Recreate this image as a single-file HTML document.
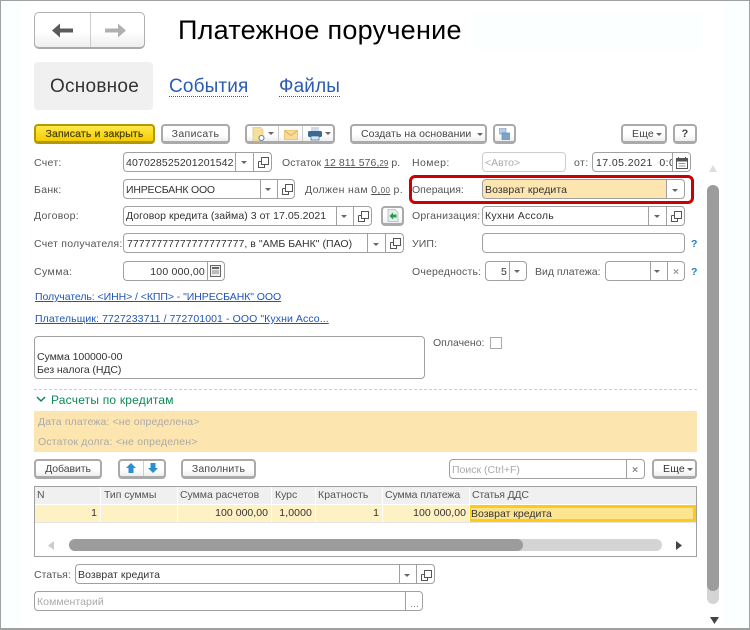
<!DOCTYPE html>
<html lang="ru"><head><meta charset="utf-8"><title>Платежное поручение</title>
<style>
html,body{margin:0;padding:0}
body{width:750px;height:630px;overflow:hidden;position:relative;background:#fff;font-family:"Liberation Sans",sans-serif;font-size:10.5px;color:#444}
div,a,svg{position:absolute;box-sizing:border-box}
.t{white-space:nowrap;line-height:14px;height:14px;letter-spacing:.1px;margin-top:1px}
.l{color:#555}
.v{color:#333}
.f{border:1px solid #a0a0a0;border-radius:4px;background:#fff}
.d{top:0;bottom:0;width:1px;background:#a0a0a0}
.b{border:2px solid #aaa;border-bottom-width:3px;border-radius:4px;background:linear-gradient(#fff 55%,#eee);color:#444;text-align:center;line-height:17px;letter-spacing:.2px;white-space:nowrap}
.a{width:0;height:0;border-left:3px solid transparent;border-right:3px solid transparent;border-top:3px solid #666}
.lk{color:#1f55b5;text-decoration:underline}
.th{top:487px;height:17px;background:#f0f0f0;line-height:16px;padding-left:3px;letter-spacing:-.05px;color:#555;white-space:nowrap}
.td{top:505px;height:17px;background:#fef1c4;line-height:17px;padding-right:3px;text-align:right;letter-spacing:.03px;color:#333;white-space:nowrap}
</style></head><body>
<div style="left:0;top:0;width:750px;height:630px;border:1px solid #a0a0a0;border-bottom:2px solid #a0a0a0;background:#fff"></div>
<div style="left:1px;top:1px;width:21px;height:627px;background:#fbffff"></div>
<div style="left:723px;top:1px;width:26px;height:627px;background:#fbffff"></div>
<div style="left:473px;top:13px;width:229px;height:37px;background:#fbffff"></div>

<div style="left:34px;top:12px;width:111px;height:37px;border:1px solid #b0b0b0;border-bottom:2px solid #aaa;border-radius:5px;background:linear-gradient(#fff 55%,#eee)"></div>
<div style="left:90px;top:13px;width:1px;height:34px;background:#ccc"></div>
<svg style="left:52px;top:23px" width="22" height="16"><path d="M0 7.5 L8 0.5 V5.5 H21 V9.5 H8 V14.5 Z" fill="#5a5a5a"/></svg>
<svg style="left:105px;top:23px" width="22" height="16"><path d="M21 7.5 L13 0.5 V5.5 H0 V9.5 H13 V14.5 Z" fill="#b0b0b0"/></svg>
<div style="left:178px;top:13px;font-size:27px;line-height:34px;color:#000;white-space:nowrap;letter-spacing:.26px">Платежное поручение</div>

<div style="left:34px;top:62px;width:119px;height:48px;background:#f0f0f0;border-radius:4px"></div>
<div style="left:50px;top:75px;font-size:19px;line-height:24px;color:#333;white-space:nowrap;letter-spacing:.25px">Основное</div>
<div style="left:169px;top:75px;font-size:19px;line-height:24px;color:#2a5db0;white-space:nowrap;border-bottom:1px dotted #2a5db0;height:22px;letter-spacing:.15px">События</div>
<div style="left:279px;top:75px;font-size:19px;line-height:24px;color:#2a5db0;white-space:nowrap;border-bottom:1px dotted #2a5db0;height:22px;letter-spacing:.15px">Файлы</div>

<!-- toolbar -->
<div class="b" style="left:34px;top:124px;width:121px;height:20px;background:linear-gradient(#ffe94a,#f5cc00);border-color:#b09a00;color:#4a4000;-webkit-text-stroke:.2px #4a4000;letter-spacing:.14px">Записать и закрыть</div>
<div class="b" style="left:161px;top:124px;width:69px;height:20px;letter-spacing:.35px">Записать</div>
<div class="b" style="left:245px;top:124px;width:90px;height:20px"></div>
<div style="left:278px;top:126px;width:1px;height:15px;background:#ccc"></div>
<div style="left:302px;top:126px;width:1px;height:15px;background:#ccc"></div>
<svg style="left:252px;top:127px" width="14" height="15"><path d="M1 0 H8 L11 3 V14 H1 Z" fill="#f5e09a" stroke="#dcc57a" stroke-width=".7"/><circle cx="9.5" cy="11" r="2.5" fill="#fff" stroke="#5a86b0" stroke-width="1.1"/></svg>
<div class="a" style="left:268px;top:132px"></div>
<svg style="left:284px;top:130px" width="14" height="10"><rect x=".5" y=".5" width="13" height="9" fill="#f7dc9c" stroke="#efc57a"/><path d="M1 1 L7 5.5 L13 1" fill="none" stroke="#e0ac55"/></svg>
<svg style="left:308px;top:127px" width="14" height="14"><rect x="3" y="0" width="8" height="5" fill="#cfdbe8"/><rect x="0" y="4" width="14" height="6" rx="1.5" fill="#3b6a97"/><rect x="3" y="9" width="8" height="4" fill="#dfe7ef" stroke="#3b6a97" stroke-width=".7"/></svg>
<div class="a" style="left:325px;top:132px"></div>
<div class="b" style="left:350px;top:124px;width:137px;height:20px;text-align:left;padding-left:9px;letter-spacing:.07px">Создать на основании</div>
<div class="a" style="left:477px;top:133px"></div>
<div class="b" style="left:493px;top:124px;width:23px;height:20px"></div>
<svg style="left:499px;top:128px" width="11" height="12"><rect x="0" y="0" width="7" height="6" fill="#b5cde3" stroke="#7fa3c5" stroke-width=".7"/><rect x="3" y="5" width="7.5" height="6.5" fill="#7fa3c5" stroke="#5f88ae" stroke-width=".7"/></svg>
<div class="b" style="left:621px;top:124px;width:46px;height:20px;text-align:left;padding-left:9px">Еще</div>
<div class="a" style="left:656px;top:133px"></div>
<div class="b" style="left:673px;top:124px;width:24px;height:20px;font-weight:bold;font-size:11px">?</div>

<!-- left form -->
<div class="t l" style="left:34px;top:155px;letter-spacing:.3px">Счет:</div>
<div class="f" style="left:123px;top:152px;width:149px;height:20px"><div class="d" style="left:111px"></div><div class="d" style="left:129px"></div></div>
<div class="t v" style="left:126px;top:155px;letter-spacing:.14px">407028525201201542</div>
<div class="a" style="left:241px;top:161px"></div>
<svg style="left:258px;top:157px" width="11" height="11"><path d="M3.5 .5 H10.5 V7.5 H3.5 Z M.5 4.5 H3.5 M.5 4.5 V10.5 H6.5 V7.5" fill="none" stroke="#555"/></svg>
<div class="t l" style="left:282px;top:155px;letter-spacing:.05px">Остаток <span style="text-decoration:underline">12 811 576,<span style="font-size:8px">29</span></span> р.</div>

<div class="t l" style="left:34px;top:182px;letter-spacing:.3px">Банк:</div>
<div class="f" style="left:123px;top:179px;width:172px;height:20px"><div class="d" style="left:136px"></div><div class="d" style="left:153px"></div></div>
<div class="t v" style="left:126px;top:182px;letter-spacing:-.2px">ИНРЕСБАНК ООО</div>
<div class="a" style="left:265px;top:188px"></div>
<svg style="left:282px;top:184px" width="11" height="11"><path d="M3.5 .5 H10.5 V7.5 H3.5 Z M.5 4.5 H3.5 M.5 4.5 V10.5 H6.5 V7.5" fill="none" stroke="#555"/></svg>
<div class="t l" style="left:305px;top:182px;letter-spacing:.35px">Должен нам <span style="text-decoration:underline">0,<span style="font-size:8px">00</span></span> р.</div>

<div class="t l" style="left:34px;top:208px;letter-spacing:.3px">Договор:</div>
<div class="f" style="left:123px;top:206px;width:249px;height:20px"><div class="d" style="left:212px"></div><div class="d" style="left:229px"></div></div>
<div class="t v" style="left:126px;top:208px;letter-spacing:.05px">Договор кредита (займа) 3 от 17.05.2021</div>
<div class="a" style="left:341px;top:215px"></div>
<svg style="left:358px;top:211px" width="11" height="11"><path d="M3.5 .5 H10.5 V7.5 H3.5 Z M.5 4.5 H3.5 M.5 4.5 V10.5 H6.5 V7.5" fill="none" stroke="#555"/></svg>
<div class="b" style="left:381px;top:206px;width:23px;height:20px"></div>
<svg style="left:387px;top:209px" width="12" height="13"><path d="M1 .5 H8 L11 3.5 V12.5 H1 Z" fill="#e4eef0" stroke="#a9bcc4" stroke-width=".8"/><path d="M2.5 7 L6 3.5 V5.5 H9.5 V8.5 H6 V10.5 Z" fill="#2f9a45"/></svg>

<div class="t l" style="left:34px;top:236px;letter-spacing:.23px">Счет получателя:</div>
<div class="f" style="left:123px;top:233px;width:281px;height:20px"><div class="d" style="left:243px"></div><div class="d" style="left:261px"></div></div>
<div class="t v" style="left:127px;top:236px;letter-spacing:.03px">77777777777777777777, в "АМБ БАНК" (ПАО)</div>
<div class="a" style="left:373px;top:243px"></div>
<svg style="left:390px;top:238px" width="11" height="11"><path d="M3.5 .5 H10.5 V7.5 H3.5 Z M.5 4.5 H3.5 M.5 4.5 V10.5 H6.5 V7.5" fill="none" stroke="#555"/></svg>

<div class="t l" style="left:34px;top:264px;letter-spacing:.42px">Сумма:</div>
<div class="f" style="left:123px;top:261px;width:102px;height:20px"><div class="d" style="left:83px"></div></div>
<div class="t v" style="left:123px;width:82px;text-align:right;top:264px;letter-spacing:.22px">100 000,00</div>
<svg style="left:210px;top:265px" width="11" height="12"><rect x=".5" y=".5" width="10" height="11" fill="#eee" stroke="#666"/><rect x="2" y="2" width="7" height="2" fill="#666"/><path d="M2 6H9M2 8H9" stroke="#888"/></svg>

<!-- right form -->
<div class="t l" style="left:412px;top:155px;letter-spacing:.42px">Номер:</div>
<div class="f" style="left:482px;top:152px;width:84px;height:20px;border-color:#ccc"></div>
<div class="t" style="left:485px;top:155px;color:#aaa;letter-spacing:0">&lt;Авто&gt;</div>
<div class="t l" style="left:574px;top:155px;letter-spacing:.42px">от:</div>
<div class="f" style="left:592px;top:152px;width:99px;height:20px;overflow:hidden"><div class="t v" style="left:3px;top:2px;letter-spacing:.42px">17.05.2021&nbsp; 0:00:00</div><div style="left:79px;top:0;bottom:0;width:20px;background:#fff;border-left:1px solid #a0a0a0"></div></div>
<svg style="left:676px;top:157px" width="12" height="12"><rect x=".5" y="1.5" width="11" height="10" fill="#fff" stroke="#555"/><rect x="1" y="2" width="10" height="2.5" fill="#555"/><path d="M2.5 0V3M9.5 0V3" stroke="#555"/><path d="M2.5 6.5H9.5M2.5 9H9.5" stroke="#999"/></svg>

<div style="left:409px;top:175px;width:285px;height:29px;border:3px solid #c00;border-radius:6px"></div>
<div class="t l" style="left:412px;top:182px;letter-spacing:0">Операция:</div>
<div class="f" style="left:482px;top:179px;width:203px;height:20px;background:linear-gradient(90deg,#fde5b0 183px,#fff 183px)"><div class="d" style="left:183px"></div></div>
<div class="t v" style="left:485px;top:182px;letter-spacing:.08px">Возврат кредита</div>
<div class="a" style="left:672px;top:189px"></div>

<div class="t l" style="left:412px;top:208px;letter-spacing:.17px">Организация:</div>
<div class="f" style="left:482px;top:206px;width:203px;height:20px"><div class="d" style="left:165px"></div><div class="d" style="left:183px"></div></div>
<div class="t v" style="left:485px;top:208px;letter-spacing:.25px">Кухни Ассоль</div>
<div class="a" style="left:654px;top:215px"></div>
<svg style="left:671px;top:211px" width="11" height="11"><path d="M3.5 .5 H10.5 V7.5 H3.5 Z M.5 4.5 H3.5 M.5 4.5 V10.5 H6.5 V7.5" fill="none" stroke="#555"/></svg>

<div class="t l" style="left:412px;top:236px">УИП:</div>
<div class="f" style="left:482px;top:233px;width:203px;height:20px"></div>
<div class="t" style="left:691px;top:236px;color:#1a7fc0;font-weight:bold">?</div>

<div class="t l" style="left:412px;top:264px;letter-spacing:.17px">Очередность:</div>
<div class="f" style="left:485px;top:261px;width:42px;height:20px"><div class="d" style="left:23px"></div></div>
<div class="t v" style="left:485px;width:22px;text-align:right;top:264px">5</div>
<div class="a" style="left:514px;top:270px"></div>
<div class="t l" style="left:535px;top:264px;letter-spacing:0">Вид платежа:</div>
<div class="f" style="left:605px;top:261px;width:80px;height:20px"><div class="d" style="left:44px"></div><div class="d" style="left:61px"></div></div>
<div class="a" style="left:654px;top:270px"></div>
<div class="t" style="left:673px;top:264px;color:#999;font-weight:bold">×</div>
<div class="t" style="left:691px;top:264px;color:#1a7fc0;font-weight:bold">?</div>

<div class="t lk" style="left:35px;top:289px;letter-spacing:-.06px">Получатель: &lt;ИНН&gt; / &lt;КПП&gt; - "ИНРЕСБАНК" ООО</div>
<div class="t lk" style="left:35px;top:311px;letter-spacing:.09px">Плательщик: 7727233711 / 772701001 - ООО "Кухни Ассо...</div>

<div class="f" style="left:34px;top:336px;width:391px;height:43px"></div>
<div class="t" style="left:37px;top:349px;color:#333;letter-spacing:-.05px">Сумма 100000-00</div>
<div class="t" style="left:37px;top:362px;color:#333;letter-spacing:-.08px">Без налога (НДС)</div>
<div class="t l" style="left:433px;top:335px;letter-spacing:0">Оплачено:</div>
<div style="left:490px;top:337px;width:12px;height:12px;border:1px solid #aaa"></div>

<div style="left:34px;top:389px;width:663px;height:1px;border-top:1px dashed #ccc"></div>
<svg style="left:36px;top:396px" width="10" height="7"><path d="M1 1 L5 5 L9 1" fill="none" stroke="#0a8a55" stroke-width="1.5"/></svg>
<div style="left:51px;top:392px;font-size:12px;line-height:16px;color:#0a8a55;white-space:nowrap;letter-spacing:.2px">Расчеты по кредитам</div>

<div style="left:34px;top:411px;width:663px;height:41px;background:#fde5b0"></div>
<div class="t" style="left:38px;top:414px;color:#aaa;letter-spacing:.13px">Дата платежа: &lt;не определена&gt;</div>
<div class="t" style="left:38px;top:434px;color:#aaa;letter-spacing:.19px">Остаток долга: &lt;не определен&gt;</div>

<div class="b" style="left:34px;top:459px;width:68px;height:20px;letter-spacing:-.08px">Добавить</div>
<div class="b" style="left:118px;top:459px;width:48px;height:20px"></div>
<div style="left:143px;top:461px;width:1px;height:15px;background:#ccc"></div>
<svg style="left:126px;top:463px" width="10" height="10"><path d="M5 0 L10 5 H7.5 V10 H2.5 V5 H0 Z" fill="#2a8fd0"/></svg>
<svg style="left:148px;top:463px" width="10" height="10"><path d="M5 10 L10 5 H7.5 V0 H2.5 V5 H0 Z" fill="#2a8fd0"/></svg>
<div class="b" style="left:181px;top:459px;width:75px;height:20px">Заполнить</div>
<div class="f" style="left:449px;top:459px;width:196px;height:20px"><div class="d" style="left:176px"></div></div>
<div class="t" style="left:452px;top:462px;color:#aaa;letter-spacing:0">Поиск (Ctrl+F)</div>
<div class="t" style="left:632px;top:462px;color:#888;font-weight:bold">×</div>
<div class="b" style="left:652px;top:459px;width:45px;height:20px;text-align:left;padding-left:9px;color:#333">Еще</div>
<div class="a" style="left:687px;top:468px"></div>

<!-- table -->
<div style="left:34px;top:486px;width:663px;height:71px;border:1px solid #a0a0a0;background:#fff"></div>
<div class="th" style="left:35px;width:65px;padding-left:2px">N</div>
<div class="th" style="left:101px;width:76px">Тип суммы</div>
<div class="th" style="left:178px;width:93px;padding-left:2px">Сумма расчетов</div>
<div class="th" style="left:272px;width:43px">Курс</div>
<div class="th" style="left:316px;width:66px;padding-left:2px;letter-spacing:.1px">Кратность</div>
<div class="th" style="left:383px;width:86px;padding-left:2px;letter-spacing:-.12px">Сумма платежа</div>
<div class="th" style="left:470px;width:226px;padding-left:2px;letter-spacing:-.18px">Статья ДДС</div>
<div class="td" style="left:35px;width:65px">1</div>
<div class="td" style="left:101px;width:76px"></div>
<div class="td" style="left:178px;width:93px">100 000,00</div>
<div class="td" style="left:272px;width:43px;letter-spacing:.1px">1,0000</div>
<div class="td" style="left:316px;width:66px">1</div>
<div class="td" style="left:383px;width:86px">100 000,00</div>
<div class="td" style="left:470px;width:226px;background:#fde48f;border:3px solid #fdc91a;border-left-width:1px;text-align:left;line-height:12px;padding:0;overflow:hidden;letter-spacing:0"><span>Возврат кредита</span></div>
<div style="left:35px;top:522px;width:661px;height:1px;background:#e4e4e4"></div>
<svg style="left:48px;top:541px" width="7" height="9"><path d="M6 0 V9 L0 4.5 Z" fill="#ccc"/></svg>
<div style="left:69px;top:539px;width:593px;height:12px;border-radius:6px;background:#d4d4d4"></div>
<div style="left:69px;top:539px;width:454px;height:12px;border-radius:6px;background:#9c9c9c"></div>
<svg style="left:676px;top:541px" width="7" height="9"><path d="M0 0 V9 L6 4.5 Z" fill="#444"/></svg>

<div class="t l" style="left:34px;top:567px;letter-spacing:0">Статья:</div>
<div class="f" style="left:75px;top:564px;width:360px;height:20px"><div class="d" style="left:323px"></div><div class="d" style="left:340px"></div></div>
<div class="t v" style="left:78px;top:567px;letter-spacing:.08px">Возврат кредита</div>
<div class="a" style="left:404px;top:574px"></div>
<svg style="left:421px;top:570px" width="11" height="11"><path d="M3.5 .5 H10.5 V7.5 H3.5 Z M.5 4.5 H3.5 M.5 4.5 V10.5 H6.5 V7.5" fill="none" stroke="#555"/></svg>
<div class="f" style="left:34px;top:591px;width:389px;height:20px"><div class="d" style="left:370px"></div></div>
<div class="t" style="left:37px;top:594px;color:#aaa;letter-spacing:.06px">Комментарий</div>
<div class="t" style="left:410px;top:596px;color:#888">...</div>

<!-- vertical scroll -->
<svg style="left:709px;top:165px" width="8" height="7"><path d="M4 0 L8 7 H0 Z" fill="#ddd"/></svg>
<div style="left:707px;top:185px;width:12px;height:419px;border-radius:6px;background:#d4d4d4"></div>
<div style="left:707px;top:185px;width:12px;height:406px;border-radius:6px;background:#9c9c9c"></div>
<svg style="left:710px;top:617px" width="9" height="7"><path d="M0 0 H9 L4.5 7 Z" fill="#444"/></svg>
</body></html>
